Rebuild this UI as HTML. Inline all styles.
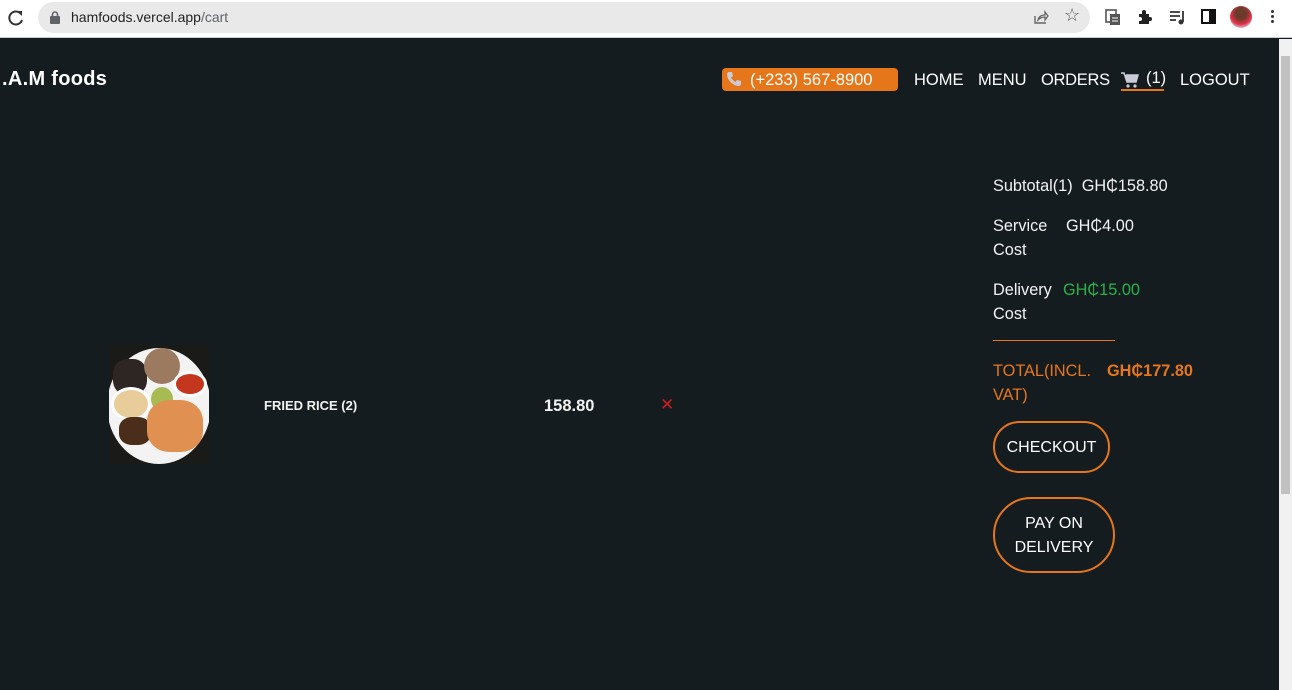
<!DOCTYPE html>
<html><head><meta charset="utf-8"><style>
*{margin:0;padding:0;box-sizing:border-box}
body{width:1292px;height:690px;overflow:hidden;background:#151c20;font-family:"Liberation Sans",sans-serif;position:relative;color:#f2f2f2}
.chrome{position:absolute;left:0;top:0;width:1292px;height:38px;background:#fff;border-bottom:1px solid #ccc}
.url{position:absolute;left:38px;top:2px;width:1052px;height:31px;border-radius:16px;background:#e9e9ea}
.url span{position:absolute;left:33px;top:7px;font-size:14px;color:#222}
.abs{position:absolute}
.sb{position:absolute;left:1279px;top:39px;width:13px;height:651px;background:#f1f1f1}
.th{position:absolute;left:1281px;top:56px;width:9px;height:438px;background:#c1c1c1}
.nav{font-size:16.5px;color:#fff;top:71px}
.sum{font-size:16.3px;line-height:24px}
.btn{position:absolute;border:2px solid #e6761a;border-radius:26px;color:#fff;font-size:16px;text-align:center}
</style></head><body>
<div class="chrome">
 <svg class="abs" style="left:7px;top:9px" width="18" height="18" viewBox="0 0 18 18"><path d="M14 5A6.5 6.5 0 1 0 15 11" fill="none" stroke="#333" stroke-width="2"/><path d="M10 2h5v5z" fill="#333"/></svg>
 <div class="url"><svg class="abs" style="left:12px;top:9px" width="10" height="13"><rect x="0" y="5" width="10" height="8" rx="1" fill="#5f6368"/><path d="M2.5 5V3.5a2.5 2.5 0 0 1 5 0V5" fill="none" stroke="#5f6368" stroke-width="1.6"/></svg><span>hamfoods.vercel.app<span style="position:static;color:#5f6368">/cart</span></span></div>
 <svg class="abs" style="left:1033px;top:9px" width="16" height="16"><path d="M2 7v7h11" fill="none" stroke="#666" stroke-width="1.4"/><path d="M5 11c1-4 4-5 7-5V3l3 4-3 4V8c-3 0-5 1-7 3z" fill="none" stroke="#666" stroke-width="1.3"/></svg>
 <div class="abs" style="left:1064px;top:5px;font-size:18px;color:#555">☆</div>
 <svg class="abs" style="left:1105px;top:9px" width="16" height="17"><rect x="1" y="1" width="10" height="12" fill="none" stroke="#555" stroke-width="1.6"/><rect x="5" y="5" width="10" height="11" fill="#555"/><path d="M7 9h6M7 12h6" stroke="#fff"/></svg>
 <svg class="abs" style="left:1137px;top:9px" width="16" height="16" viewBox="0 0 16 16"><path d="M2 5h3V3a2 2 0 0 1 4 0v2h3v3h1a2 2 0 0 1 0 4h-1v3H2v-3h1a2 2 0 0 0 0-4H2z" fill="#222"/></svg>
 <svg class="abs" style="left:1169px;top:10px" width="18" height="15"><path d="M1 2h10M1 6h10M1 10h6" stroke="#333" stroke-width="1.8"/><path d="M14 1v11" stroke="#333" stroke-width="1.8"/><circle cx="12" cy="12" r="2.5" fill="#333"/></svg>
 <svg class="abs" style="left:1201px;top:9px" width="15" height="15"><rect x="1" y="1" width="13" height="13" fill="none" stroke="#111" stroke-width="2"/><rect x="8" y="1" width="6" height="13" fill="#111"/></svg>
 <div class="abs" style="left:1230px;top:6px;width:22px;height:22px;border-radius:50%;background:radial-gradient(circle at 50% 35%,#6b3a2a 30%,#e8324a 60%,#c8c8d8 80%)"></div>
 <div class="abs" style="left:1271px;top:10px;width:3px;height:3px;background:#333;border-radius:50%;box-shadow:0 5px 0 #333,0 10px 0 #333"></div>
</div>
<div class="sb"></div><div class="th"></div>

<div class="abs" style="left:2px;top:68px;font-size:20px;font-weight:bold;color:#fff;letter-spacing:0.3px">.A.M foods</div>

<div class="abs" style="left:722px;top:68px;width:176px;height:23px;background:#e6761a;border-radius:4px"></div>
<svg class="abs" style="left:726px;top:71px" width="16" height="16" viewBox="0 0 16 16"><path d="M3 1l3 0 1 4-2 1.5c1 2 2.5 3.5 4.5 4.5L11 9l4 1v3c0 1-1 2-2 2C7 15 1 9 1 3c0-1 1-2 2-2z" fill="#c9ccd8"/></svg>
<div class="abs nav" style="left:750px">(+233) 567-8900</div>
<div class="abs nav" style="left:914px">HOME</div>
<div class="abs nav" style="left:978px">MENU</div>
<div class="abs nav" style="left:1041px;letter-spacing:-0.3px">ORDERS</div>
<svg class="abs" style="left:1121px;top:72px" width="18" height="16" viewBox="0 0 18 16"><path d="M0 1h3l3 9h9l2-7H5" fill="#c9ccd8" stroke="#c9ccd8" stroke-width="1.5"/><circle cx="7" cy="14" r="1.6" fill="#c9ccd8"/><circle cx="14" cy="14" r="1.6" fill="#c9ccd8"/></svg>
<div class="abs nav" style="left:1146px;top:69px">(1)</div>
<div class="abs" style="left:1121px;top:89px;width:43px;height:2px;background:#e6761a"></div>
<div class="abs nav" style="left:1180px">LOGOUT</div>

<div class="abs" style="left:109px;top:345px;width:100px;height:119px;background:#1a1a18;overflow:hidden">
 <div class="abs" style="left:-2px;top:3px;width:104px;height:116px;border-radius:50%;background:#f3f3f3"></div>
 <div class="abs" style="left:4px;top:14px;width:34px;height:36px;border-radius:40%;background:#2e2623"></div>
 <div class="abs" style="left:35px;top:3px;width:36px;height:36px;border-radius:50%;background:#9b7a60"></div>
 <div class="abs" style="left:64px;top:26px;width:34px;height:26px;border-radius:50%;background:#c4361e;border:3px solid #fff"></div>
 <div class="abs" style="left:2px;top:42px;width:40px;height:34px;border-radius:50%;background:#e8cc9a;border:3px solid #fff"></div>
 <div class="abs" style="left:42px;top:42px;width:22px;height:24px;border-radius:50%;background:#a8bb52"></div>
 <div class="abs" style="left:10px;top:72px;width:32px;height:28px;border-radius:40%;background:#4a2d1a"></div>
 <div class="abs" style="left:38px;top:55px;width:56px;height:52px;border-radius:40%;background:#e09050"></div>
</div>
<div class="abs" style="left:264px;top:398px;font-size:13px;font-weight:bold;color:#f2f2f2">FRIED RICE (2)</div>
<div class="abs" style="left:544px;top:397px;font-size:16.5px;font-weight:bold;color:#f2f2f2">158.80</div>
<div class="abs" style="left:660px;top:395px;font-size:17px;color:#d01c1c">✕</div>

<div class="abs sum" style="left:993px;top:174px">Subtotal(1)&nbsp; GH₵158.80</div>
<div class="abs sum" style="left:993px;top:214px">Service<br>Cost</div>
<div class="abs sum" style="left:1066px;top:214px">GH₵4.00</div>
<div class="abs sum" style="left:993px;top:278px">Delivery<br>Cost</div>
<div class="abs sum" style="left:1063px;top:278px;color:#27b34a">GH₵15.00</div>
<div class="abs" style="left:993px;top:340px;width:122px;height:1px;background:#e6761a"></div>
<div class="abs sum" style="left:993px;top:359px;color:#e6761a">TOTAL(INCL.<br>VAT)</div>
<div class="abs sum" style="left:1107px;top:359px;color:#e6761a;font-weight:bold">GH₵177.80</div>
<div class="btn" style="left:993px;top:421px;width:117px;height:52px;line-height:49px">CHECKOUT</div>
<div class="btn" style="left:993px;top:497px;width:122px;height:76px;line-height:24px;padding-top:13px;border-radius:38px">PAY ON<br>DELIVERY</div>
</body></html>
